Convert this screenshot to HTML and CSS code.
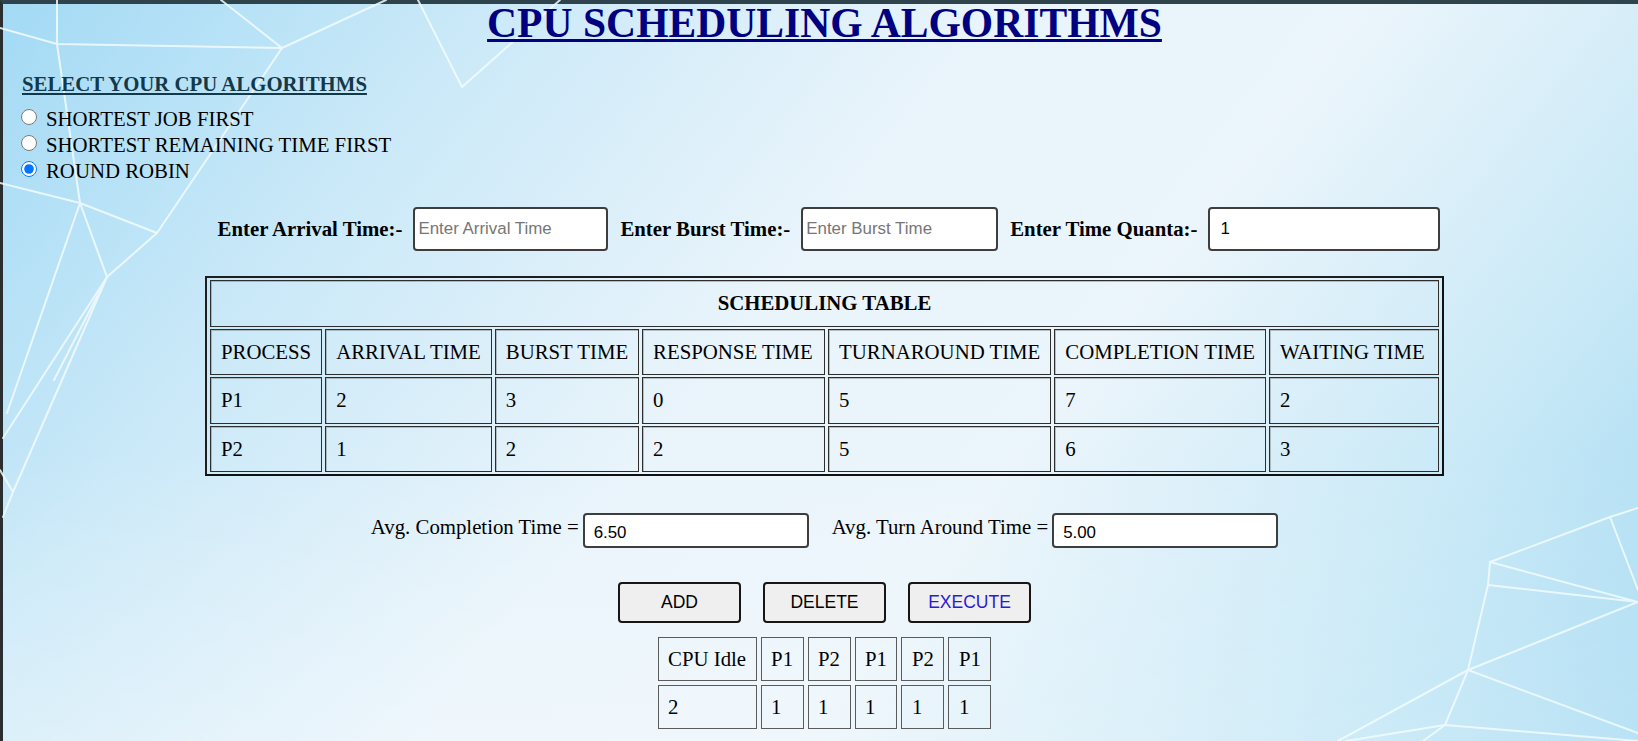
FILE: index.html
```html
<!DOCTYPE html>
<html lang="en">
<head>
<meta charset="utf-8">
<title>CPU Scheduling Algorithms</title>
<link rel="stylesheet" href="styles.css">
</head>
<body>
<div class="frame">
  <svg class="lines" width="1638" height="741" viewBox="0 0 1638 741" aria-hidden="true">
    <g fill="none" stroke="#f2fcff" stroke-width="2" stroke-linejoin="round" stroke-linecap="round">
      <polyline points="57,0 57,44 80,203 107,277 54,380"/>
      <polyline points="0,28 57,44 282,48"/>
      <polyline points="221,0 282,48 386,0"/>
      <polyline points="418,0 462,87 560,0"/>
      <polyline points="282,48 157,233 107,277"/>
      <polyline points="0,183 80,203 157,233"/>
      <polyline points="80,203 7,413"/>
      <polyline points="107,277 3,438"/>
      <polyline points="107,277 13,492 3,517"/>
      <polyline points="0,470 13,492"/>
      <polyline points="1638,508 1610,517 1490,562 1488,585 1468,670 1338,741"/>
      <polyline points="1610,517 1638,590"/>
      <polyline points="1490,562 1638,602 1488,585"/>
      <polyline points="1638,602 1468,670 1638,733"/>
      <polyline points="1468,670 1445,725 1423,741"/>
      <polyline points="1445,725 1638,741"/>
      <polyline points="1445,725 1346,741"/>
    </g>
  </svg>

  <div class="content">
    <h1 class="title">CPU SCHEDULING ALGORITHMS</h1>

    <section class="algo">
      <h4 class="algo-title">SELECT YOUR CPU ALGORITHMS</h4>
      <label class="radio-row"><input type="radio" name="algo" class="radio"><span>SHORTEST JOB FIRST</span></label>
      <label class="radio-row"><input type="radio" name="algo" class="radio"><span>SHORTEST REMAINING TIME FIRST</span></label>
      <label class="radio-row"><input type="radio" name="algo" class="radio" checked><span>ROUND ROBIN</span></label>
    </section>

    <div class="entry">
      <span class="entry-label">Enter Arrival Time:-</span>
      <input class="entry-input in-a" type="text" placeholder="Enter Arrival Time">
      <span class="entry-label">Enter Burst Time:-</span>
      <input class="entry-input in-b" type="text" placeholder="Enter Burst Time">
      <span class="entry-label">Enter Time Quanta:-</span>
      <input class="entry-input in-q" type="text" value="1">
    </div>

    <table class="sched">
      <tr><th class="caption" colspan="7">SCHEDULING TABLE</th></tr>
      <tr>
        <td class="c-process">PROCESS</td>
        <td class="c-arrival">ARRIVAL TIME</td>
        <td class="c-burst">BURST TIME</td>
        <td class="c-response">RESPONSE TIME</td>
        <td class="c-turnaround">TURNAROUND TIME</td>
        <td class="c-completion">COMPLETION TIME</td>
        <td class="c-waiting">WAITING TIME</td>
      </tr>
      <tr><td>P1</td><td>2</td><td>3</td><td>0</td><td>5</td><td>7</td><td>2</td></tr>
      <tr><td>P2</td><td>1</td><td>2</td><td>2</td><td>5</td><td>6</td><td>3</td></tr>
    </table>

    <div class="avg">
      <span class="avg-label">Avg. Completion Time =</span>
      <input class="avg-input" type="text" value="6.50">
      <span class="avg-label second">Avg. Turn Around Time =</span>
      <input class="avg-input" type="text" value="5.00">
    </div>

    <div class="buttons">
      <button class="btn" type="button">ADD</button>
      <button class="btn" type="button">DELETE</button>
      <button class="btn btn-exec" type="button">EXECUTE</button>
    </div>

    <table class="gantt">
      <tr><td>CPU Idle</td><td>P1</td><td>P2</td><td>P1</td><td>P2</td><td>P1</td></tr>
      <tr><td>2</td><td>1</td><td>1</td><td>1</td><td>1</td><td>1</td></tr>
    </table>
  </div>
</div>
</body>
</html>
```

FILE: styles.css
```css
* { box-sizing: border-box; }

html, body {
  margin: 0;
  padding: 0;
}

body {
  font-family: "Liberation Serif", "Times New Roman", serif;
  font-size: 20.8px;
  color: #000;
  overflow: hidden;
}

.frame {
  position: relative;
  height: 741px;
  border-top: 4px solid #2f434c;
  border-left: 3px solid #2b2e31;
  padding-left: 8px;
  background:
    linear-gradient(to bottom, rgba(255,255,255,0) 60%, rgba(255,255,255,0.25) 100%),
    linear-gradient(128deg, #a3daf5 0%, #cbe9f8 22%, #e9f4fb 45%, #ebf5fb 62%, #c9e9f7 82%, #a2d9f2 100%);
}

.lines {
  position: absolute;
  left: -3px;
  top: -4px;
  opacity: 0.85;
  overflow: hidden;
}

.content {
  position: relative;
}

.title {
  margin: -4px 0 0;
  text-align: center;
  font-size: 41.6px;
  line-height: 46px;
  font-weight: bold;
  color: #000080;
  text-decoration: underline;
  text-decoration-thickness: 2.5px;
}

.algo {
  display: flex;
  flex-direction: column;
  align-items: flex-start;
}

.algo-title {
  margin: 26px 0 10px 11px;
  font-size: 20.8px;
  line-height: 24px;
  font-weight: bold;
  color: #12394a;
  text-decoration: underline;
}

.radio-row {
  display: flex;
  align-items: center;
  height: 26px;
  line-height: 26px;
}

.radio {
  width: 16px;
  height: 16px;
  margin: 0 9.5px 4px 9.5px;
}

.entry {
  display: flex;
  justify-content: center;
  align-items: center;
  margin-top: 23px;
  padding-left: 9px;
  height: 44px;
}

.entry-label {
  font-weight: bold;
  line-height: 24px;
  margin-right: 11px;
}

.entry-input {
  height: 44px;
  border: 2px solid #3e3e3e;
  border-radius: 4px;
  background: #fff;
  font-family: "Liberation Sans", Arial, sans-serif;
  font-size: 16.9px;
  color: #000;
  margin-right: 12px;
}

.entry-input::placeholder { color: #767676; }

.in-a { width: 195px; padding: 0 3px; }
.in-b { width: 197px; padding: 0 3px; }
.in-q { width: 232px; padding: 0 10px; margin-right: 0; }

.sched {
  margin: 25px auto 0;
  border-collapse: separate;
  border-spacing: 3px 2px;
  border: 2px solid #1e1e1e;
  border-right-color: #111;
  border-bottom-color: #111;
}

.sched td,
.sched th {
  border: 1px solid #2e2e2e;
  box-shadow: inset 1px 1px 0 rgba(90, 90, 90, 0.35);
  padding: 10px;
  line-height: 24.5px;
  text-align: left;
  font-weight: normal;
  white-space: nowrap;
}

.sched .caption {
  text-align: center;
  font-weight: bold;
}

.c-process { width: 112px; }
.c-arrival { width: 166px; }
.c-burst { width: 144px; }
.c-response { width: 183px; }
.c-turnaround { width: 222px; }
.c-completion { width: 210px; }
.c-waiting { width: 170px; }

.avg {
  display: flex;
  justify-content: center;
  align-items: flex-start;
  margin-top: 37px;
}

.avg-label {
  line-height: 24px;
  margin-top: 2px;
  margin-right: 4px;
}

.avg-label.second { margin-left: 23px; }

.avg-input {
  width: 226px;
  height: 35px;
  border: 2px solid #3e3e3e;
  border-radius: 4px;
  background: #fff;
  padding: 5px 9px 0;
  font-family: "Liberation Sans", Arial, sans-serif;
  font-size: 16.9px;
  color: #000;
}

.buttons {
  display: flex;
  justify-content: center;
  gap: 22px;
  margin-top: 34px;
}

.btn {
  width: 123px;
  height: 41px;
  background: #efefef;
  border: 2px solid #161616;
  border-radius: 4px;
  font-family: "Liberation Sans", Arial, sans-serif;
  font-size: 17.5px;
  color: #000;
  padding: 0;
}

.btn-exec { color: #2a1bd6; }

.gantt {
  margin: 10px auto 0;
  border-collapse: separate;
  border-spacing: 4px;
}

.gantt td {
  border: 1px solid #5b5b5b;
  padding: 9px 9.5px;
  line-height: 24px;
  white-space: nowrap;
}
```
